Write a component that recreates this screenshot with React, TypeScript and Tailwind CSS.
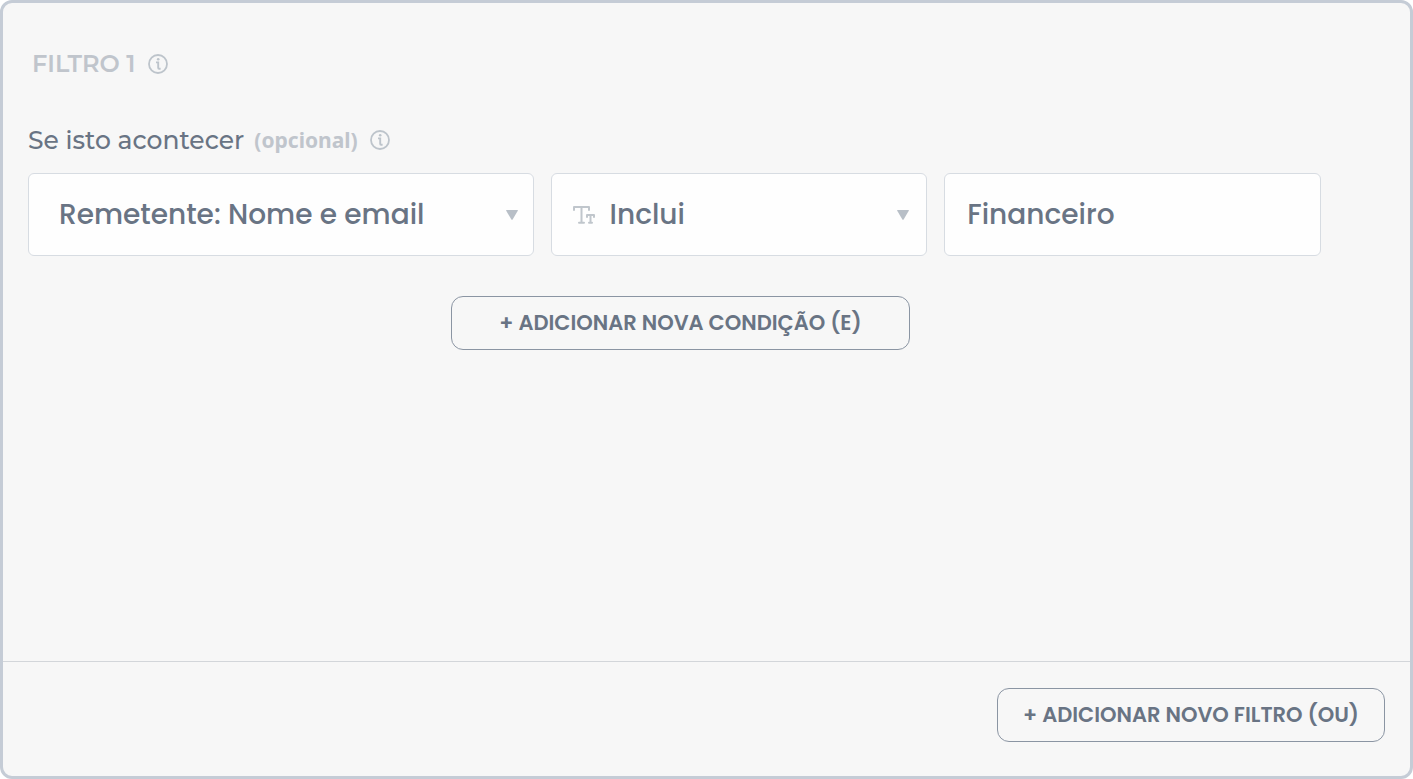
import { useState } from "react";

function InfoButton({ label }: { label: string }) {
  return (
    <button type="button" aria-label={label} className="flex text-[#bdc4cb]">
      <svg viewBox="0 0 20 20" className="size-5" fill="none" stroke="currentColor" aria-hidden="true">
        <circle cx="10" cy="10" r="9" strokeWidth="1.8" />
        <path d="M8 8.4h2.2v5.4q0 .9.9.9h1.5" strokeWidth="1.9" />
        <circle cx="10.2" cy="5.3" r="1.3" fill="currentColor" stroke="none" />
      </svg>
    </button>
  );
}

function Caret() {
  return (
    <svg viewBox="0 0 12 10" className="h-[10px] w-3 self-center justify-self-end" fill="#b8bfc7" aria-hidden="true">
      <path d="M0.6 0h10.8q.8 0 .4.8L6.6 9.5q-.6.8-1.2 0L.2.8Q-.2 0 .6 0z" />
    </svg>
  );
}

function TextTypeIcon() {
  return (
    <svg viewBox="0 0 22 18" className="pointer-events-none col-start-1 row-start-1 ml-[22px] h-[18px] w-[22px] self-center" fill="none" stroke="#c0c6cc" strokeWidth="2" strokeLinecap="round" strokeLinejoin="round" aria-hidden="true">
      <path d="M1 4V1h15v3M8.5 1v15.5M6 16.8h5" />
      <path d="M14 11V9h7v2M17.5 9v7.5M16 16.8h3" />
    </svg>
  );
}

const heading = "font-['Montserrat','Poppins','Inter',sans-serif] leading-9";

const field =
  "h-[83px] w-full min-w-0 appearance-none rounded-md border border-[#d7dce2] bg-[#fefefe] text-[28px] font-medium text-[#697484] outline-none focus-visible:border-[#697484]";

const outlineButton =
  "h-[54px] rounded-xl border border-[#8b95a3] text-[21px] font-semibold text-[#697484]";

export default function App() {
  const [source, setSource] = useState("Remetente: Nome e email");
  const [operator, setOperator] = useState("Inclui");
  const [value, setValue] = useState("Financeiro");

  return (
    <main className="bg-white font-['Poppins','Inter',sans-serif]">
      <section className="flex min-h-screen flex-col rounded-xl border-3 border-[#c5ccd6] bg-[#f7f7f7]">
        <div className="flex-1 pt-[43px] pr-[89px] pb-10 pl-[25px]">
          <header className="flex items-center gap-3 pl-1">
            <h2 className={`${heading} text-2xl font-semibold text-[#c0c5cc]`}>FILTRO 1</h2>
            <InfoButton label="Sobre o filtro" />
          </header>

          <div className="mt-10 flex items-center">
            <h3 className={`${heading} text-[25px] font-medium text-[#697484]`}>Se isto acontecer</h3>
            <span className="mr-3 ml-[10px] font-['Noto_Sans',sans-serif] text-[21px] leading-9 font-bold text-[#c0c5cc]">(opcional)</span>
            <InfoButton label="Sobre as condições" />
          </div>

          <div className="mt-[15px] grid grid-cols-[506fr_377fr_377fr] gap-[17px]">
            <div className="grid items-center">
              <select aria-label="Campo" value={source} onChange={(e) => setSource(e.target.value)} className={`${field} col-start-1 row-start-1 pr-10 pl-[30px]`}>
                <option>Remetente: Nome e email</option>
              </select>
              <div className="pointer-events-none col-start-1 row-start-1 grid pr-4"><Caret /></div>
            </div>
            <div className="grid items-center">
              <select aria-label="Operador" value={operator} onChange={(e) => setOperator(e.target.value)} className={`${field} col-start-1 row-start-1 pr-10 pl-[58px]`}>
                <option>Inclui</option>
              </select>
              <TextTypeIcon />
              <div className="pointer-events-none col-start-1 row-start-1 grid pr-[18px]"><Caret /></div>
            </div>
            <input aria-label="Valor" value={value} onChange={(e) => setValue(e.target.value)} className={`${field} px-[22px]`} />
          </div>

          <div className="mt-10 flex justify-center pl-3">
            <button type="button" className={`${outlineButton} px-[47px]`}>+ ADICIONAR NOVA CONDIÇÃO (E)</button>
          </div>
        </div>

        <footer className="flex justify-end border-t border-[#d3d6da] px-[25px] pt-[26px] pb-[34px]">
          <button type="button" className={`${outlineButton} px-[25px]`}>+ ADICIONAR NOVO FILTRO (OU)</button>
        </footer>
      </section>
    </main>
  );
}
